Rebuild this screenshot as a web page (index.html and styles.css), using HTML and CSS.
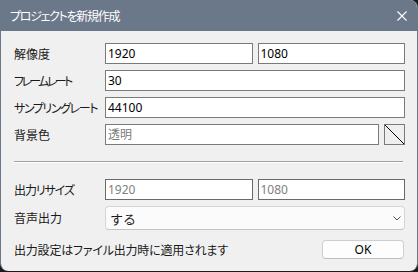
FILE: index.html
```html
<!DOCTYPE html>
<html lang="ja">
<head>
<meta charset="utf-8">
<title>プロジェクトを新規作成</title>
<link rel="stylesheet" href="styles.css">
</head>
<body>
<div class="window">
  <div class="titlebar">
    <span class="title">プロジェクトを新規作成</span>
    <svg class="close" width="10" height="10" viewBox="0 0 10 10"><path d="M0.5 0.5L9.5 9.5M9.5 0.5L0.5 9.5" stroke="#ffffff" stroke-width="1.1" fill="none"/></svg>
  </div>
  <div class="content">
    <div class="form">
      <label class="label">解像度</label>
      <div class="pair">
        <input class="field" type="text" value="1920">
        <input class="field" type="text" value="1080">
      </div>
      <label class="label kana-wide">フレームレート</label>
      <input class="field" type="text" value="30">
      <label class="label kana">サンプリングレート</label>
      <input class="field" type="text" value="44100">
      <label class="label">背景色</label>
      <div class="colorrow">
        <input class="field" type="text" placeholder="透明">
        <div class="swatch"><svg width="19" height="19" viewBox="0 0 19 19"><path d="M0 0L19 19" stroke="#000" stroke-width="1"/></svg></div>
      </div>
    </div>
    <div class="sep"></div>
    <div class="form">
      <label class="label kana-mixed">出力リサイズ</label>
      <div class="pair">
        <input class="field disabled" type="text" value="1920" disabled>
        <input class="field disabled" type="text" value="1080" disabled>
      </div>
      <label class="label">音声出力</label>
      <div class="select">
        <span>する</span>
        <svg width="8" height="5" viewBox="0 0 8 5"><path d="M0.5 0.5L4 4L7.5 0.5" stroke="#555" stroke-width="1" fill="none"/></svg>
      </div>
    </div>
    <div class="footer">
      <span class="note">出力設定はファイル出力時に適用されます</span>
      <button class="ok">OK</button>
    </div>
  </div>
</div>
</body>
</html>
```
FILE: styles.css
```css
* { box-sizing: border-box; }
html, body { margin: 0; padding: 0; }
body {
  background: #1c1c1c;
  width: 418px;
  height: 272px;
  font-family: "Noto Sans", "Noto Sans CJK JP", sans-serif;
  color: #1a1a1a;
}
.window {
  width: 418px;
  height: 271px;
  background: #f0f0f0;
  border-left: 1px solid #6b7889;
  border-right: 1px solid #6b7889;
  border-radius: 0 8px 8px 8px;
  overflow: hidden;
}
.titlebar {
  height: 31px;
  background: #6b7889;
  display: flex;
  align-items: center;
  justify-content: space-between;
  padding: 0 10px 0 9px;
  color: #ffffff;
}
.title {
  font-family: "Noto Sans CJK JP", sans-serif;
  font-size: 12px;
  font-feature-settings: "palt";
  letter-spacing: -1.3px;
  line-height: 1;
}
.content {
  padding: 12px 12px 0 12px;
}
.form {
  display: grid;
  grid-template-columns: 92px 1fr;
  row-gap: 6px;
  align-items: center;
}
.label {
  font-family: "Noto Sans CJK JP", sans-serif;
  font-size: 12px;
  font-feature-settings: "palt";
  line-height: 1;
  padding-left: 1px;
  white-space: nowrap;
}
.label.kana-wide { letter-spacing: -2.6px; }
.label.kana { letter-spacing: -1.4px; }
.label.kana-mixed { letter-spacing: -1.1px; }
.field {
  height: 21px;
  width: 100%;
  min-width: 0;
  border: 1px solid #7a7a7a;
  background: #ffffff;
  font-family: "Noto Sans", "Noto Sans CJK JP", sans-serif;
  font-size: 12px;
  color: #000;
  padding: 0 2px;
  margin: 0;
  outline: none;
  border-radius: 0;
}
.field::placeholder {
  color: #7a7a7a;
  font-family: "Noto Sans CJK JP", sans-serif;
}
.field.disabled {
  color: #808080;
  background: #ffffff;
  border-color: #6a6a6a;
}
.pair {
  display: grid;
  grid-template-columns: 1fr 1fr;
  column-gap: 5px;
}
.colorrow {
  display: flex;
  gap: 5px;
}
.swatch {
  flex: 0 0 21px;
  height: 21px;
  border: 1px solid #7a7a7a;
  background: #efefef;
  overflow: hidden;
}
.swatch svg { display: block; }
.sep {
  margin: 16px 2px 16px 1px;
  height: 2px;
  border-top: 1px solid #a0a0a0;
  border-bottom: 1px solid #ffffff;
}
.select {
  height: 24px;
  border: 1px solid #d6d6d6;
  border-bottom-color: #c4c4c4;
  border-radius: 4px;
  background: #fbfbfb;
  display: flex;
  align-items: center;
  justify-content: space-between;
  padding: 0 3px 0 4px;
  font-family: "Noto Sans CJK JP", sans-serif;
  font-size: 13px;
}
.select svg { display: block; }
.footer {
  display: flex;
  align-items: center;
  justify-content: space-between;
  margin-top: 10px;
  padding-left: 1px;
  padding-right: 1px;
}
.note {
  font-family: "Noto Sans CJK JP", sans-serif;
  font-size: 12px;
  font-feature-settings: "palt";
  letter-spacing: -0.2px;
  line-height: 1;
}
.ok {
  width: 82px;
  height: 19px;
  border: 1px solid #cfcfcf;
  border-bottom-color: #bdbdbd;
  border-radius: 4px;
  background: #fdfdfd;
  font-family: "Noto Sans", sans-serif;
  font-size: 12px;
  color: #000;
  padding: 0;
  line-height: 1;
}
```
